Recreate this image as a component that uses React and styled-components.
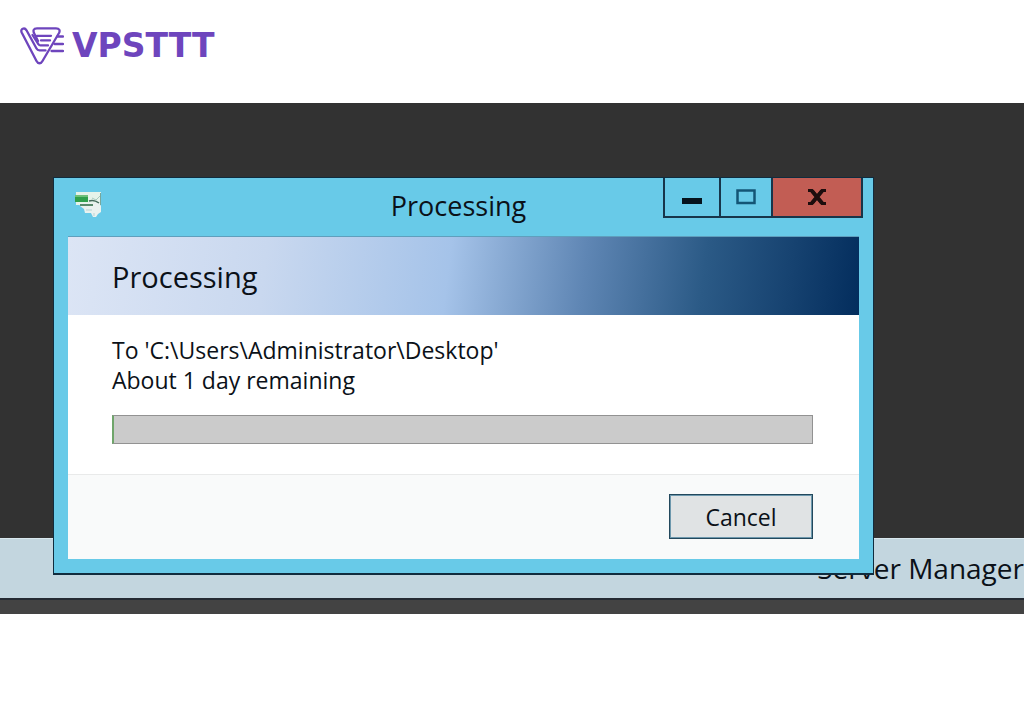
import React from "react"
import styled, { createGlobalStyle } from "styled-components"

const GlobalStyle = createGlobalStyle`
    * {
        box-sizing: border-box;
    }

    body {
        margin: 0;
        background: #ffffff;
        color: #0b1118;
        font-family: "Open Sans", "Noto Sans", sans-serif;
        overflow-x: hidden;
    }
    `

const Header = styled.header`
    display: flex;
    align-items: center;
    height: 103px;
    padding: 0 20px 12px;
    `

const Brand = styled.a`
    display: flex;
    align-items: center;
    gap: 8px;
    color: #6e45bd;
    font-family: "DejaVu Sans", sans-serif;
    font-size: 33px;
    font-weight: bold;
    line-height: 40px;
    text-decoration: none;
    `

const Desktop = styled.main`
    position: relative;
    display: flex;
    flex-direction: column;
    justify-content: flex-end;
    height: 511px;
    padding-bottom: 14px;
    background: linear-gradient(#323232 0 480px, #434343 480px);
    overflow: hidden;
    `

const Taskbar = styled.div`
    height: 62px;
    padding-top: 10px;
    background: #c3d6df;
    border-top: 1px solid #d9e8ee;
    border-bottom: 2px solid #242a33;
    font-size: 28px;
    line-height: 38px;
    text-align: right;
    white-space: nowrap;
    `

const Window = styled.section`
    position: absolute;
    top: 74px;
    left: 53px;
    right: 150px;
    padding: 0 14px 14px;
    background: #68cae8;
    border: 1px solid #102c3e;
    border-bottom-width: 2px;
    `

const TitleBar = styled.div`
    display: grid;
    grid-template-columns: 1fr auto 1fr;
    height: 58px;
    margin: 0 -4px 0 -14px;
    `

const TitleIcon = styled.svg`
    margin: 14px 0 0 21px;
    `

const Title = styled.h1`
    margin: 0;
    font-size: 27px;
    font-weight: 400;
    line-height: 56px;
    `

const Controls = styled.div`
    display: flex;
    justify-self: end;
    height: 40px;
    border: 2px solid #17354a;
    border-top: 0;
    `

const ControlButton = styled.button`
    display: flex;
    align-items: center;
    justify-content: center;
    width: ${props => props.$width};
    padding: 0;
    border: 0;
    border-left: ${props => props.$first ? "0" : "2px solid #17354a"};
    background: ${props => props.$danger ? "#c25d54" : "#68cae8"};
    `

const Banner = styled.div`
    height: 79px;
    padding: 0 44px;
    border-top: 1px solid #5f9fbd;
    background: linear-gradient(97deg, #dce5f5 0%, #c9d8ef 25%, #a5c3e9 48%, #5f86b4 65%, #2b5a86 80%, #164270 91%, #032d5d 100%);
    `

const BannerTitle = styled.h2`
    margin: 0;
    font-size: 29px;
    font-weight: 400;
    line-height: 79px;
    `

const Content = styled.div`
    padding: 20px 46px 30px 44px;
    background: #ffffff;
    `

const Message = styled.p`
    margin: 0;
    font-size: 23px;
    line-height: 30px;
    `

const Progress = styled.progress`
    display: block;
    appearance: none;
    width: 100%;
    height: 29px;
    margin-top: 20px;
    border: 1px solid #929292;
    border-left: 2px solid #6fa56b;

    &::-webkit-progress-bar {
        background: #cbcbcb;
    }

    &::-webkit-progress-value {
        background: #a9cda5;
    }
    `

const Footer = styled.div`
    display: flex;
    justify-content: flex-end;
    padding: 19px 46px 20px;
    background: #f9fafa;
    border-top: 1px solid #e9eaea;
    `

const CancelButton = styled.button`
    width: 144px;
    height: 45px;
    padding: 0;
    border: 1px solid #23485c;
    outline: 1px solid #6d98ad;
    outline-offset: -2px;
    background: #e0e3e4;
    color: inherit;
    font-family: inherit;
    font-size: 23px;
    line-height: 30px;
    `

function BrandMark(){
    return (
        <svg width="44" height="38" viewBox="0 0 44 38" fill="none" stroke="currentColor" strokeWidth="2.3" strokeLinecap="round" strokeLinejoin="round" aria-hidden="true">
            <path d="M18 14 L14.5 7 C12.5 3.5 13.5 1.4 17 1.4 H36 C39.5 1.4 40.3 3.5 39 6 L22.5 34 C21 37 18 37 16.5 34 L1.7 5.5 C0 1.8 4.5 0 6.5 3.3 L16.5 21.5 C17.3 23 18 23.4 19.5 23.4 H25.5" />
            <path d="M17 8.8 H31" />
            <path d="M12.5 8 L18.5 17.3 C19 18.2 19.6 18.4 20.5 18.4 H28" />
            <path d="M21 13.4 H30" />
            <path d="M37.5 9.5 H43 M34.5 17 H43 M31.5 24 H43" />
        </svg>
    )
}

function TransferIcon(){
    return (
        <TitleIcon width="27" height="26" viewBox="0 0 27 26" aria-hidden="true">
            <path d="M1 0 H26 V13 H1 Z" fill="#e6f3ea" />
            <path d="M0 3 H13 V10 H0 Z" fill="#2fa04c" />
            <path d="M0 3 H13 V5 H0 Z" fill="#6fc07a" />
            <path d="M4 11 H24 L26 14 V20 L23 22 L21 25 H18 L16 21 H10 L9 17 L5 14 Z" fill="#eaf2ef" />
            <path d="M5 13 H18" stroke="#35704a" strokeWidth="1.6" />
            <path d="M14 9 C17 8 20 8 24 11" fill="none" stroke="#466b5c" strokeWidth="1.5" />
            <path d="M17 6 L21 8 L25 4" fill="none" stroke="#a9c9bd" />
            <path d="M25.5 1 V13" stroke="#78a79c" />
            <path d="M11 18 H17 M19 21 V24" stroke="#b9d3d4" />
        </TitleIcon>
    )
}

export default function App(){
    return (
        <>
            <GlobalStyle />
            <Header>
                <Brand href="#">
                    <BrandMark />
                    VPSTTT
                </Brand>
            </Header>
            <Desktop>
                <Taskbar>Server Manager</Taskbar>
                <Window aria-label="Processing">
                    <TitleBar>
                        <TransferIcon />
                        <Title>Processing</Title>
                        <Controls>
                            <ControlButton $width="54px" $first aria-label="Minimize">
                                <svg width="20" height="16" viewBox="0 0 20 16"><path d="M0 9 H20 V15 H0 Z" fill="#06131c" /></svg>
                            </ControlButton>
                            <ControlButton $width="52px" aria-label="Maximize">
                                <svg width="20" height="16" viewBox="0 0 20 16"><path d="M1.5 1.5 H18.5 V14 H1.5 Z" fill="none" stroke="#135575" strokeWidth="2.5" /></svg>
                            </ControlButton>
                            <ControlButton $width="90px" $danger aria-label="Close">
                                <svg width="18" height="16" viewBox="0 0 18 16"><path d="M0 1.5 H4 L14 14.5 H18 M18 1.5 H14 L4 14.5 H0" fill="none" stroke="#1d0d0d" strokeWidth="3" /><path d="M4 2 L14 14 M14 2 L4 14" stroke="#1d0d0d" strokeWidth="4" /></svg>
                            </ControlButton>
                        </Controls>
                    </TitleBar>
                    <Banner>
                        <BannerTitle>Processing</BannerTitle>
                    </Banner>
                    <Content>
                        <Message>To 'C:\Users\Administrator\Desktop'</Message>
                        <Message>About 1 day remaining</Message>
                        <Progress value="0" max="100" aria-label="Copy progress" />
                    </Content>
                    <Footer>
                        <CancelButton type="button">Cancel</CancelButton>
                    </Footer>
                </Window>
            </Desktop>
        </>
    )
}
